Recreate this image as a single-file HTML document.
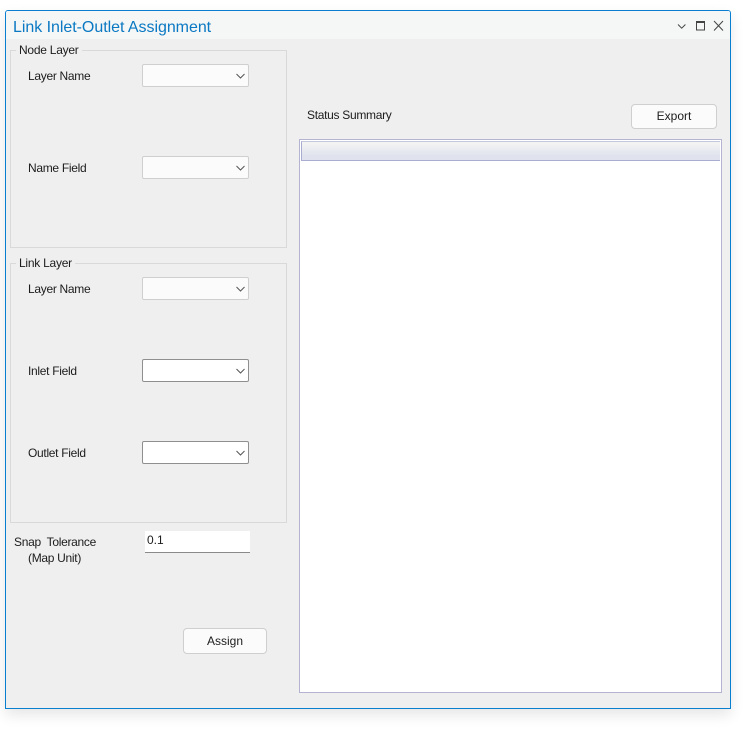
<!DOCTYPE html>
<html>
<head>
<meta charset="utf-8">
<style>
html,body{margin:0;padding:0;width:752px;height:738px;background:#fff;overflow:hidden}
body{position:relative;font-family:"Liberation Sans",sans-serif;font-size:12px;color:#1c1c1c}
div{position:absolute;box-sizing:border-box}
.win{left:5px;top:10px;width:726px;height:699px;background:#efefef;border:1px solid #0a7fd0;border-radius:3px 3px 0 0;box-shadow:0 6px 14px rgba(0,0,0,.10)}
.tb{left:6px;top:11px;width:724px;height:28px;background:#f5f7f7;border-radius:2px 2px 0 0}
.title{left:13px;top:19px;font-size:16px;line-height:18px;color:#0a78c2;white-space:nowrap;letter-spacing:-.04px}
.grp{border:1px solid #d9d9d9;left:10px;width:277px}
.lg{background:#efefef;padding:0 3px;left:16px;line-height:14px;white-space:nowrap;letter-spacing:-.25px}
.l{line-height:14px;white-space:nowrap;letter-spacing:-.3px}
.c{left:142px;width:107px;height:23px;border:1px solid #cfcfcf;border-radius:2px;background:#fbfbfb}
.c.d{border-color:#8f8f8f;background:#fff}
.c svg{position:absolute;left:93px;top:8px}
.btn{border:1px solid #cfcfcf;border-radius:4px;background:#fbfbfb;text-align:center;white-space:nowrap}
</style>
</head>
<body>
<div class="win"></div>
<div class="tb"></div>
<div class="title">Link Inlet-Outlet Assignment</div>
<svg style="position:absolute;left:676px;top:20px" width="50" height="14" viewBox="0 0 50 14">
<path d="M2 4.5l3.7 3.7 3.7-3.7" fill="none" stroke="#444" stroke-width="1"/>
<path d="M20.5 1.5h8v8.500h-8z" fill="none" stroke="#444" stroke-width="1"/>
<path d="M20 2h9" stroke="#444" stroke-width="2"/>
<path d="M38 1l9 9.500M47 1l-9 9.500" stroke="#444" stroke-width="1"/>
</svg>

<div class="grp" style="top:50px;height:198px"></div>
<div class="lg" style="top:43px">Node Layer</div>
<div class="l" style="left:28px;top:69px">Layer Name</div>
<div class="c" style="top:64px"><svg width="10" height="7"><path d="M.5 1l4 4 4-4" fill="none" stroke="#555" stroke-width="1"/></svg></div>
<div class="l" style="left:28px;top:161px">Name Field</div>
<div class="c" style="top:156px"><svg width="10" height="7"><path d="M.5 1l4 4 4-4" fill="none" stroke="#555" stroke-width="1"/></svg></div>

<div class="grp" style="top:263px;height:260px"></div>
<div class="lg" style="top:256px">Link Layer</div>
<div class="l" style="left:28px;top:282px">Layer Name</div>
<div class="c" style="top:277px"><svg width="10" height="7"><path d="M.5 1l4 4 4-4" fill="none" stroke="#555" stroke-width="1"/></svg></div>
<div class="l" style="left:28px;top:364px">Inlet Field</div>
<div class="c d" style="top:359px"><svg width="10" height="7"><path d="M.5 1l4 4 4-4" fill="none" stroke="#555" stroke-width="1"/></svg></div>
<div class="l" style="left:28px;top:446px">Outlet Field</div>
<div class="c d" style="top:441px"><svg width="10" height="7"><path d="M.5 1l4 4 4-4" fill="none" stroke="#555" stroke-width="1"/></svg></div>

<div class="l" style="left:14px;top:535px;white-space:pre">Snap  Tolerance</div>
<div class="l" style="left:28px;top:551px">(Map Unit)</div>
<div style="left:145px;top:531px;width:105px;height:22px;background:#fff;border-bottom:1px solid #8a8a8a;padding-left:2px;line-height:19px">0.1</div>

<div class="btn" style="left:183px;top:628px;width:84px;height:26px;line-height:24px">Assign</div>

<div class="l" style="left:307px;top:108px">Status Summary</div>
<div class="btn" style="left:631px;top:104px;width:86px;height:25px;line-height:23px">Export</div>

<div style="left:299px;top:139px;width:423px;height:554px;background:#fff;border:1px solid #b4b4d2"></div>
<div style="left:301px;top:141px;width:419px;height:20px;background:linear-gradient(#f3f3f3 10%,#e0e3ee 75%);border:1px solid #a9add2;border-top-color:#c4c6dc;border-right:0"></div>
</body>
</html>
